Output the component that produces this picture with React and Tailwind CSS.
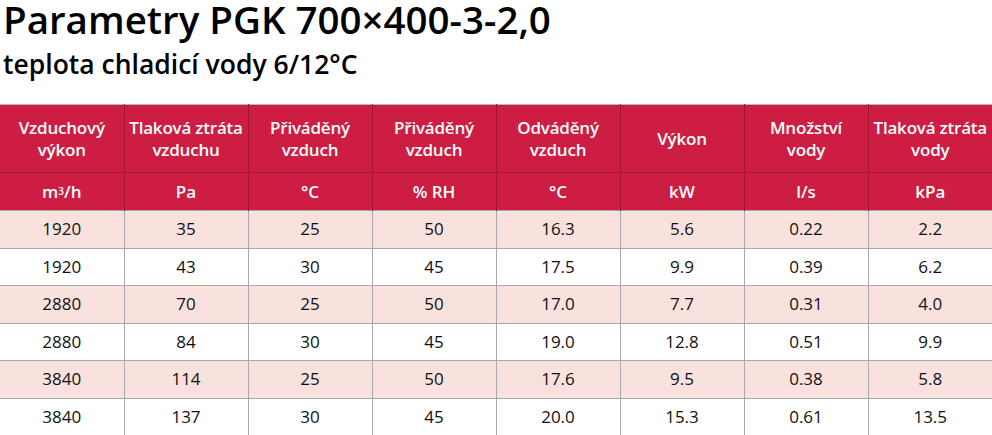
const headers = [
  ['Vzduchový', 'výkon'],
  ['Tlaková ztráta', 'vzduchu'],
  ['Přiváděný', 'vzduch'],
  ['Přiváděný', 'vzduch'],
  ['Odváděný', 'vzduch'],
  ['Výkon'],
  ['Množství', 'vody'],
  ['Tlaková ztráta', 'vody'],
]

const units = [<>m<sup className="text-[10px] relative -top-[3px]">3</sup>/h</>, 'Pa', '°C', '% RH', '°C', 'kW', 'l/s', 'kPa']

const rows = [
  ['1920', '35', '25', '50', '16.3', '5.6', '0.22', '2.2'],
  ['1920', '43', '30', '45', '17.5', '9.9', '0.39', '6.2'],
  ['2880', '70', '25', '50', '17.0', '7.7', '0.31', '4.0'],
  ['2880', '84', '30', '45', '19.0', '12.8', '0.51', '9.9'],
  ['3840', '114', '25', '50', '17.6', '9.5', '0.38', '5.8'],
  ['3840', '137', '30', '45', '20.0', '15.3', '0.61', '13.5'],
]

export default function App() {
  return (
    <div className="w-[992px] h-[435px] overflow-hidden bg-white" style={{ fontFamily: '"Open Sans", "Noto Sans", sans-serif' }}>
      <div className="h-[104px] pl-[3px] flex flex-col">
        <h1 className="text-[38.5px] leading-[38px] font-semibold text-black">Parametry PGK 700×400-3-2,0</h1>
        <h2 className="text-[26.5px] leading-[36px] font-semibold text-black mt-[8px]">teplota chladicí vody 6/12°C</h2>
      </div>
      <table className="w-[992px] table-fixed border-collapse text-center">
        <thead>
          <tr className="h-[68px] bg-[#cd1d42] text-white">
            {headers.map((h, i) => (
              <th key={i} className="w-[124px] border-x border-[#9e1632] border-t border-t-[#b8b8b8] first:border-l-0 last:border-r-0 font-semibold text-[17px] leading-[22px] tracking-[-0.2px] align-middle">
                {h.map((l, j) => <div key={j}>{l}</div>)}
              </th>
            ))}
          </tr>
          <tr className="h-[38px] bg-[#cd1d42] text-white">
            {units.map((u, i) => (
              <th key={i} className="border-x border-[#9e1632] border-t border-t-[#a31738] first:border-l-0 last:border-r-0 font-semibold text-[17px] leading-[22px]">
                {u}
              </th>
            ))}
          </tr>
        </thead>
        <tbody>
          {rows.map((r, i) => (
            <tr key={i} className={`h-[37.5px] ${i % 2 === 0 ? 'bg-[#f9e1de]' : 'bg-white'}`}>
              {r.map((c, j) => (
                <td key={j} className="border border-[#a9a9a9] first:border-l-0 last:border-r-0 text-[17px] text-[#111] leading-[22px]">
                  {c}
                </td>
              ))}
            </tr>
          ))}
        </tbody>
      </table>
    </div>
  )
}
